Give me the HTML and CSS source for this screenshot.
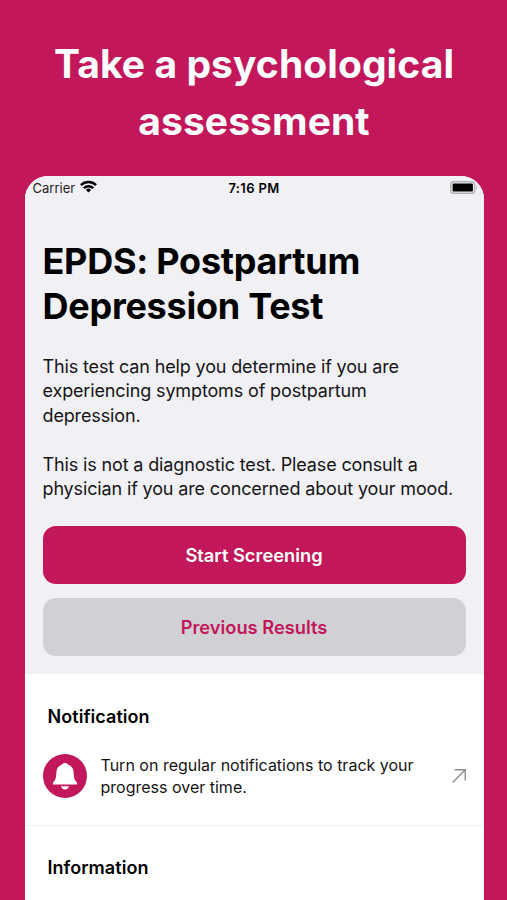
FILE: index.html
```html
<!DOCTYPE html>
<html lang="en">
<head>
<meta charset="utf-8">
<title>EPDS: Postpartum Depression Test</title>
<link rel="stylesheet" href="styles.css">
</head>
<body>
<h1 class="promo">Take a psychological<br>assessment</h1>
<main class="phone">
  <header class="status">
    <div class="carrier">Carrier
      <svg class="wifi" viewBox="0 0 17 13"><g fill="none" stroke="#000" stroke-width="2.4"><path d="M.9 5.2a10.8 10.8 0 0 1 15.2 0"/><path d="M3.8 8.2a6.7 6.7 0 0 1 9.400 0"/></g><path d="M8.500 12.500 5.900 9.900a3.700 3.700 0 0 1 5.200 0z"/></svg>
    </div>
    <div class="time">7:16 PM</div>
    <svg class="battery" viewBox="0 0 28 13"><rect x=".8" y=".8" width="23.900" height="11.400" rx="3" fill="#f1f0f5" stroke="#b3b3b6" stroke-width="1.500"/><rect x="2.600" y="2.400" width="20.300" height="8.200" rx="1.200"/><path d="M26 4.500q1.700 2 0 4z" fill="#b3b3b6"/></svg>
  </header>
  <section class="intro">
    <h2 class="title">EPDS: Postpartum<br>Depression Test</h2>
    <p class="text">This test can help you determine if you are<br>experiencing symptoms of postpartum<br>depression.</p>
    <p class="text">This is not a diagnostic test. Please consult a<br>physician if you are concerned about your mood.</p>
    <button class="button primary">Start Screening</button>
    <button class="button secondary">Previous Results</button>
  </section>
  <section class="group">
    <h3 class="label">Notification</h3>
    <div class="row">
      <svg class="bell" viewBox="0 0 44 44"><circle cx="22" cy="22" r="22" fill="#c2185b"/><g fill="#fff"><path d="M22 9c1.400 0 2.400.6 3 1.600 3.700 1.300 5.400 4 5.600 7.600.3 6 .9 7.400 2.600 9.400.7.900 1 1.700.9 2.900H9.900c-.1-1.200.2-2 .9-2.900 1.700-2 2.300-3.400 2.600-9.400.2-3.600 1.900-6.300 5.600-7.600.6-1 1.600-1.600 3-1.600z"/><path d="M18 32.300h8c-.5 2-2 3.300-4 3.300s-3.500-1.300-4-3.300z"/></g></svg>
      <p class="note">Turn on regular notifications to track your<br>progress over time.</p>
      <svg class="arrow" viewBox="0 0 14 14" fill="none" stroke="#8e8e92" stroke-width="1.400"><path d="M.6 13.400 13 1M2.600.8h10.600v10.600"/></svg>
    </div>
  </section>
  <section class="group">
    <h3 class="label">Information</h3>
  </section>
</main>
</body>
</html>
```
FILE: styles.css
```css
* { box-sizing: border-box; margin: 0; padding: 0; }
body {
  width: 507px; height: 900px; overflow: hidden;
  background: #c2185b; color: #000;
  font-family: Inter, "Liberation Sans", sans-serif;
  display: flex; flex-direction: column; align-items: center;
  white-space: nowrap;
}
.promo {
  height: 176px; flex: none; padding: 35px 0 0 1px;
  text-align: center; color: #fff;
  font-size: 39px; line-height: 57px; font-weight: 700; letter-spacing: 0.08px;
}
.phone {
  width: 459px; height: 740px; flex: none; margin-left: 1px;
  border-radius: 23px 23px 0 0; overflow: hidden; background: #fff;
}
.status {
  height: 24px; padding: 0 6px 0 8px; background: #f1f0f5;
  display: grid; grid-template-columns: 1fr auto 1fr; align-items: center;
  font-size: 13px; line-height: 24px;
}
.carrier { display: flex; align-items: center; gap: 5px; color: #222; }
.wifi { width: 17px; height: 13px; margin-top: -3px; }
.time { font-weight: 600; letter-spacing: 0.35px; margin-right: 2px; }
.battery { width: 28px; height: 13px; justify-self: end; margin-top: -2px; }
.intro {
  height: 474px; padding: 39px 18px 0; background: #f1f0f5;
  display: flex; flex-direction: column;
}
.title { font-size: 36px; line-height: 45px; font-weight: 700; letter-spacing: -0.25px; margin-bottom: 26px; }
.text { font-size: 18px; line-height: 24.400px; letter-spacing: -0.14px; color: #151515; margin-bottom: 24.400px; }
.button {
  height: 58px; flex: none; border: 0; border-radius: 13px; padding-top: 1px;
  font: 600 18.300px/57px Inter, "Liberation Sans", sans-serif;
}
.primary { background: #c2185b; color: #fff; margin-bottom: 14px; }
.secondary { background: #d1d0d5; color: #c2185b; }
.group { padding: 30px 18px 0; }
.group + .group { padding-top: 29px; border-top: 1px solid #efeff1; }
.label { padding-left: 5px; font-size: 18px; line-height: 25px; font-weight: 600; letter-spacing: 0.05px; }
.row { height: 96px; padding: 25px 0 27px; display: flex; align-items: center; }
.bell { width: 44px; height: 44px; margin-right: 14px; }
.note { flex: 1; font-size: 16px; line-height: 22px; color: #151515; }
.arrow { width: 14px; height: 14px; margin-right: 0; }
```
